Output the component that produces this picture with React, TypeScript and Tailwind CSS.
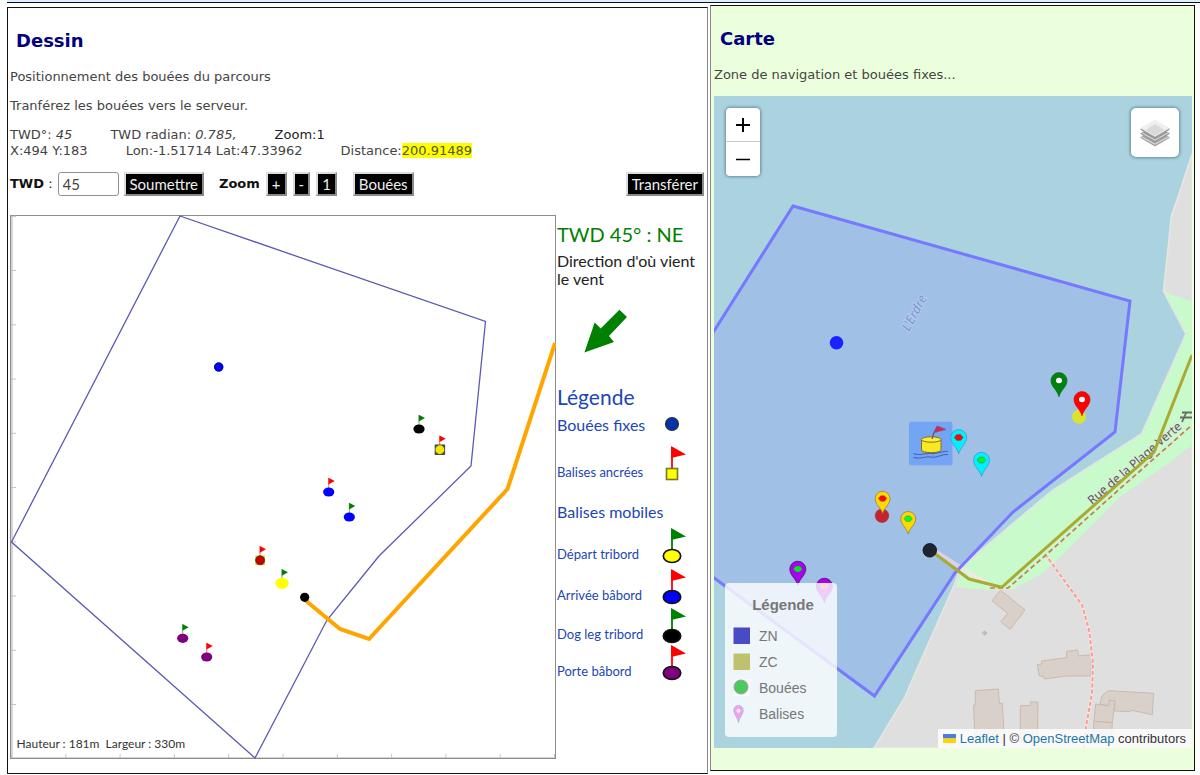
import React from "react";

const RED = "#ff0000";
const GREEN = "#008000";

type BuoyProps = { x: number; y: number; fill: string; flag: string; rx?: number; ry?: number };

function Flag({ x, y, color }: { x: number; y: number; color: string }) {
  return (
    <g transform={`translate(${x} ${y})`}>
      <path d="M0 -4V-14" stroke={color} strokeWidth="0.6" />
      <path d="M-0.2 -14.3L6 -11L-0.2 -7.6Z" fill={color} />
    </g>
  );
}

function Buoy({ x, y, fill, flag, rx = 5.6, ry = 4.6 }: BuoyProps) {
  return (
    <g>
      <Flag x={x} y={y} color={flag} />
      <ellipse cx={x} cy={y} rx={rx} ry={ry} fill={fill} />
    </g>
  );
}

function CourseDrawing() {
  const ticks = [0, 1, 2, 3, 4, 5, 6, 7, 8, 9, 10];
  return (
    <svg viewBox="10 215 546 544" className="block min-w-0 flex-1" role="img" aria-label="Parcours">
      <rect x="10.5" y="215.5" width="545" height="543" fill="#fff" stroke="#8c8c8c" />
      <path d="M12 216V758" stroke="#d6d6d6" strokeWidth="2" />
      <path d="M11 757.5H555" stroke="#d6d6d6" />
      {ticks.map((t) => (
        <g key={t} stroke="#c4c4c4">
          {t < 10 && <path d={`M11 ${216.3 + t * 54.25}h5`} />}
          <path d={`M${11.5 + t * 54.3} 754v4`} />
        </g>
      ))}
      <path
        d="M180 216L485.5 321.5L471 466L379 556L327 620L255 758L11.5 542Z"
        fill="none"
        stroke="#5a5ab4"
        strokeWidth="1.3"
      />
      <path d="M305 600L340 629L369 639L507.5 489L555 343" fill="none" stroke="#ffa500" strokeWidth="4" />
      <circle cx="218.7" cy="367" r="4.6" fill="#0000ff" />
      <circle cx="218.7" cy="367" r="4.2" fill="none" stroke="#00007a" strokeWidth="0.8" />
      <Buoy x={419} y={429} fill="#000" flag={GREEN} />
      <Flag x={439.7} y={449.7} color={RED} />
      <rect x="435.2" y="445" width="9.4" height="9.4" fill="#44442e" stroke="#444" />
      <circle cx="439.9" cy="449.7" r="4.4" fill="#f0e800" />
      <Buoy x={328.7} y={492} fill="#0000ff" flag={RED} />
      <Buoy x={349.3} y={517} fill="#0000ff" flag={GREEN} />
      <Flag x={260} y={560.3} color={RED} />
      <rect x="255.4" y="555.6" width="9.4" height="9.4" fill="#d8c800" />
      <circle cx="260.1" cy="560.3" r="4.5" fill="#c40000" stroke="#5c2000" strokeWidth="0.7" />
      <Buoy x={282} y={583.3} fill="#ffff00" flag={GREEN} rx={6.7} ry={5.6} />
      <circle cx="304.7" cy="597.3" r="4.6" fill="#000" />
      <Buoy x={182.7} y={638.3} fill="#800080" flag={GREEN} />
      <Buoy x={206.7} y={657} fill="#800080" flag={RED} />
      <text x="16.5" y="748" className="whitespace-pre fill-[#333] text-[12px]">
        {"Hauteur : 181m  Largeur : 330m"}
      </text>
    </svg>
  );
}

function LegendIcon({ shape, fill, flag }: { shape: string; fill: string; flag?: string }) {
  return (
    <svg viewBox="-16 -18 32 32" className="h-8 w-8 shrink-0 overflow-visible" aria-hidden="true">
      {flag && (
        <g>
          <path d="M0 0V-27" stroke={flag} strokeWidth="1.8" />
          <path d="M-0.9 -28L14 -19.5L-0.9 -16Z" fill={flag} />
        </g>
      )}
      {shape === "circle" && <circle cx="0" cy="-3" r="6.5" fill={fill} stroke="#333" strokeWidth="1.2" />}
      {shape === "square" && <rect x="-5.5" y="-5.5" width="11" height="11" fill={fill} stroke="#77772a" strokeWidth="1.6" />}
      {shape === "ellipse" && <ellipse cx="0" cy="0" rx="8.7" ry="6.5" fill={fill} stroke="#111" strokeWidth="1.7" />}
    </svg>
  );
}

function WindLegend() {
  return (
    <aside className="flex w-[149px] shrink-0 flex-col pl-px text-[#1c46b4]">
      <p className="mt-[5px] text-[20px] leading-7 text-[#008000]">TWD 45° : NE</p>
      <p className="mt-1 text-[16px] leading-[18px] text-[#222]">
        Direction d'où vient
        <br />
        le vent
      </p>
      <svg viewBox="584 309 44 44" className="ml-[27px] mt-[21px] h-11 w-11" aria-hidden="true">
        <path d="M584.4 352.6L594.7 322.4L600.7 328.4L619.4 309.7L627 317L609 336L614 342Z" fill="#008000" />
      </svg>
      <h2 className="mt-8 text-[21px] leading-6">Légende</h2>
      <ul className="flex flex-col text-[13px]">
        <li className="flex h-8 items-center justify-between pr-[17px] text-[16px]">Bouées fixes<LegendIcon shape="circle" fill="#0033a8" /></li>
        <li className="mt-[15px] flex h-8 items-center justify-between pr-[17px]">Balises ancrées<LegendIcon shape="square" fill="#ffff00" flag={RED} /></li>
        <li className="mt-2 flex h-8 items-center text-[16px]">Balises mobiles</li>
        <li className="mt-[10px] flex h-8 items-center justify-between pr-[17px]">Départ tribord<LegendIcon shape="ellipse" fill="#ffff00" flag={GREEN} /></li>
        <li className="mt-[9px] flex h-8 items-center justify-between pr-[17px]">Arrivée bâbord<LegendIcon shape="ellipse" fill="#0000ff" flag={RED} /></li>
        <li className="mt-[7px] flex h-8 items-center justify-between pr-[17px]">Dog leg tribord<LegendIcon shape="ellipse" fill="#000" flag={GREEN} /></li>
        <li className="mt-[5px] flex h-8 items-center justify-between pr-[17px]">Porte bâbord<LegendIcon shape="ellipse" fill="#800080" flag={RED} /></li>
      </ul>
    </aside>
  );
}

function BlackButton({ children }: { children: React.ReactNode }) {
  return (
    <button
      type="button"
      className="h-6 border-2 border-b-[#8a8a8a] border-l-[#dcdcdc] border-r-[#8a8a8a] border-t-[#dcdcdc] bg-black px-1 font-['Lato','Noto_Sans',sans-serif] text-[15px] leading-5 text-[#eee]"
    >
      {children}
    </button>
  );
}

type PinProps = { x: number; y: number; fill: string; edge: string; dot: string; s?: number };

function Pin({ x, y, fill, edge, dot, s = 1 }: PinProps) {
  return (
    <g transform={`translate(${x} ${y}) scale(${s})`}>
      <path
        d="M0 0C-1.6 -6.5 -8 -10 -8 -16.2A8 7.9 0 0 1 8 -16.2C8 -10 1.6 -6.5 0 0Z"
        fill={fill}
        stroke={edge}
        strokeWidth="0.7"
      />
      {dot === "#fff" ? (
        <ellipse cx="0" cy="-16.2" rx="3" ry="2.8" fill="#fff" />
      ) : (
        <path d="M-4.5 -16.3L-2 -19.3H2L4.5 -16.3L2 -13.3H-2Z" fill={dot} stroke="#555" strokeWidth="0.4" />
      )}
    </g>
  );
}

function MapDrawing() {
  return (
    <svg
      viewBox="714 96 478 652"
      preserveAspectRatio="xMidYMid slice"
      className="absolute inset-0 h-full w-full"
      role="img"
      aria-label="Carte de l'Erdre"
    >
      <rect x="600" y="0" width="800" height="900" fill="#aad3df" />
      <path
        d="M1192 154L1177 200L1171.5 215L1163.5 291L1186 334L1156.5 400L1141.7 434L1053 490L960 568L955 583L913 678L905 697L874 748H1192Z"
        fill="#dfdfdf"
        stroke="#e6e6e2"
        strokeWidth="1.5"
      />
      <path
        d="M1163.5 291L1192 302V445L1173 460L1120 497L1057 560L1040 575L1013 589L988 590L956 587L962 568L1053 490L1141.7 434L1186 334Z"
        fill="#c8facc"
      />
      <path d="M1163.5 291L1186 334L1141.7 434L1053 490L960 568" fill="none" stroke="#e2e6e2" strokeWidth="1.5" />
      <g transform="translate(930 540) scale(0.3333)" fill="#d9d0c9" stroke="#c8bab0" strokeWidth="3">
        <path d="M212 151L285 210L241 268L212 245L233 220L186 182Z" />
        <path d="M322 374L335 372V363L410 353V334L443 330L446 348L485 344L483 408H410L343 417L340 409L328 408Z" />
        <path d="M136 452L205 447L208 490H217L222 580V607H135L131 495H136Z" />
        <path d="M271 497H300L302 485L324 487L322 607H271Z" />
        <path d="M535 452L671 460L667 524L605 511L600 515L553 513L555 482L538 481L536 498L510 492L516 468Z" />
        <path d="M497 492L536 498L538 481L555 483L547 548L492 544Z" />
        <path d="M492 544L547 548L543 607H487Z" />
        <path d="M164 272L171 279L164 286L157 279Z" fill="#c8bab0" />
      </g>
      <path d="M1045 554L1082 605L1089 630L1093 663L1092 693L1086 727L1084 748" fill="none" stroke="#f0e6e4" strokeWidth="3" />
      <path d="M1045 554L1082 605L1089 630L1093 663L1092 693L1086 727L1084 748" fill="none" stroke="#fa9a90" strokeWidth="1.8" strokeDasharray="4 2.2" />
      <path d="M990 588H1008L1047 554L1123 486L1192 425" fill="none" stroke="#e0ecd2" strokeWidth="2.6" />
      <path d="M990 588H1008L1047 554L1123 486L1192 425" fill="none" stroke="#ac8a4c" strokeWidth="1.7" strokeDasharray="5 3" />
      <path d="M932 549L963 569L990 585" fill="none" stroke="#efe9e4" strokeWidth="4" />
      <path d="M1182 412.5H1197M1180 417.5H1199M1186.5 412L1182 422M1192.5 412L1197 422" fill="none" stroke="#6b6b66" strokeWidth="1.8" />
      <path
        d="M793 206L1130 301L1115 432L1012.5 512.5L955 573L874.5 696L607.5 499.5Z"
        fill="#7777ff"
        fillOpacity="0.2"
        stroke="#7777ff"
        strokeWidth="3"
      />
      <text
        transform="translate(909 332) rotate(-62)"
        className="fill-[#7c96cf] stroke-[#b4cbef] font-['Noto_Sans',sans-serif] text-[13px] italic [paint-order:stroke] [stroke-width:2px]"
      >
        L'Erdre
      </text>
      <text
        transform="translate(1092 505) rotate(-40.6)"
        className="fill-[#555] stroke-[#dcf0dc] font-['Noto_Sans',sans-serif] text-[12px] [paint-order:stroke] [stroke-width:2px]"
      >
        Rue de la Plage Verte
      </text>
      <path d="M1192 355L1154 452L1001.7 587.3L969 579L932 551.5" fill="none" stroke="#aaaa33" strokeWidth="3" />
      <circle cx="836.5" cy="342.7" r="6.8" fill="#1c22ff" />
      <circle cx="1079" cy="416.7" r="7" fill="#dce32e" />
      <circle cx="882" cy="515.7" r="6.8" fill="#c4252d" stroke="#a8283c" strokeWidth="0.6" />
      <circle cx="929.8" cy="550.3" r="6.8" fill="#1e2530" stroke="#080c14" strokeWidth="0.8" />
      <g>
        <rect x="909" y="421.7" width="43.5" height="43.5" rx="2.5" fill="#74a4f4" />
        <path d="M921.5 439.5V450C921.5 453.5 941 453.5 941 450V439.5" fill="#f8ea20" stroke="#8a6d1c" />
        <ellipse cx="931.2" cy="439.5" rx="9.8" ry="2.7" fill="#fbee3c" stroke="#8a6d1c" />
        <path d="M932 439C933 434 935 430 937.5 426" fill="none" stroke="#6e4a50" strokeWidth="1.2" />
        <path d="M937.5 426L946 429.5L934.5 432.5Z" fill="#e0244c" stroke="#7a5080" strokeWidth="0.6" />
        <path
          d="M913.5 453.5C920 456.5 925 452.5 931 453.5S941 451 948 451.2M913.5 457.2C920 460 925 455.6 931 457S941 454 948 454.6"
          fill="none"
          stroke="#4664b8"
          strokeWidth="1.1"
        />
      </g>
      <Pin x={1059} y={396.7} fill="#048010" edge="#04700c" dot="#fff" />
      <Pin x={1082} y={415.7} fill="#ff0000" edge="#e80010" dot="#fff" />
      <Pin x={958.7} y={453.7} fill="#00f0ff" edge="#3f8cc8" dot="#f80808" />
      <Pin x={981.5} y={476.4} fill="#00f0ff" edge="#3f8cc8" dot="#08f030" />
      <Pin x={882.6} y={513.7} fill="#ffd800" edge="#7c7440" dot="#f80808" s={0.93} />
      <Pin x={908.2} y={533.9} fill="#ffd800" edge="#7c7440" dot="#00ff30" s={0.93} />
      <Pin x={797.8} y={585.3} fill="#a800f0" edge="#36104c" dot="#08e030" />
      <Pin x={824.4} y={602.3} fill="#a800f0" edge="#36104c" dot="#f06020" />
    </svg>
  );
}

function MapLegend() {
  return (
    <div className="absolute bottom-[11px] left-[11px] h-[154px] w-[112px] rounded-[4px] bg-white/80 px-2 pt-3 text-[14px] text-[#777]">
      <h2 className="pl-1 text-center text-[15px] font-bold leading-5">Légende</h2>
      <ul className="mt-2 flex flex-col">
        <li className="flex h-[26px] items-center gap-2">
          <svg viewBox="0 0 18 18" className="h-[18px] w-[18px]" aria-hidden="true"><rect x="0.5" y="0.5" width="16.5" height="16.5" fill="#484bc4" /></svg>
          ZN
        </li>
        <li className="flex h-[26px] items-center gap-2">
          <svg viewBox="0 0 18 18" className="h-[18px] w-[18px]" aria-hidden="true"><rect x="0.5" y="0.5" width="16.5" height="16.5" fill="#bfc16e" /></svg>
          ZC
        </li>
        <li className="flex h-[26px] items-center gap-2">
          <svg viewBox="0 0 18 18" className="h-[18px] w-[18px]" aria-hidden="true">
            <rect x="1" y="0" width="16" height="17" fill="#f8fafc" />
            <circle cx="8" cy="8" r="7" fill="#48ce58" stroke="#a898a8" />
          </svg>
          Bouées
        </li>
        <li className="flex h-[26px] items-center gap-2">
          <svg viewBox="0 0 18 18" className="h-[18px] w-[18px]" aria-hidden="true">
            <path d="M5.5 17.5C5 12.5 0.8 9.5 0.8 5.5A4.7 5 0 0 1 10.2 5.5C10.2 9.5 6 12.5 5.5 17.5Z" fill="#fa9cf0" stroke="#a8bce4" />
            <circle cx="5.5" cy="5.8" r="2" fill="#eef4fa" />
          </svg>
          Balises
        </li>
      </ul>
    </div>
  );
}

function LeafletMap() {
  return (
    <div className="relative h-[652px] overflow-hidden font-['Liberation_Sans',Arial,sans-serif]">
      <MapDrawing />
      <div className="absolute left-3 top-3 flex w-[34px] flex-col rounded-[4px] bg-white shadow-[0_0_3px_1px_rgba(60,90,110,0.6)]">
        <button type="button" aria-label="Zoom avant" className="flex h-[34px] items-center justify-center border-b border-[#ccc]">
          <svg viewBox="0 0 14 14" className="h-3.5 w-3.5" aria-hidden="true"><path d="M0 7H14M7 0V14" stroke="#000" strokeWidth="2" /></svg>
        </button>
        <button type="button" aria-label="Zoom arrière" className="flex h-[34px] items-center justify-center">
          <svg viewBox="0 0 14 14" className="h-3.5 w-3.5" aria-hidden="true"><path d="M0 7.5H14" stroke="#000" strokeWidth="1.5" /></svg>
        </button>
      </div>
      <button
        type="button"
        aria-label="Couches"
        className="absolute right-[13px] top-3 flex h-[49px] w-[48px] items-center justify-center rounded-[5px] bg-white shadow-[0_0_3px_1px_rgba(60,90,110,0.6)]"
      >
        <svg viewBox="0 0 30 28" className="h-7 w-[30px]" aria-hidden="true">
          <path d="M0.5 18L15 9L29.5 18V19L15 27.5L0.5 19Z" fill="#a4a4a4" />
          <path d="M0.5 17.2L15 25.2L29.5 17.2" fill="none" stroke="#e4e4e4" strokeWidth="1" />
          <path d="M0.5 14L15 6L29.5 14V15L15 23.8L0.5 15Z" fill="#9a9a9a" />
          <path d="M0.5 13L15 21.2L29.5 13" fill="none" stroke="#e4e4e4" strokeWidth="1" />
          <path d="M0.5 9.5L15 2L29.5 9.5V10.8L15 19.6L0.5 10.8Z" fill="#9a9a9a" />
          <path d="M15 0.5L29.5 9.3L15 17.8L0.5 9.3Z" fill="#efefef" />
          <path d="M15 5L24.5 11L15 16.8L5.5 11Z" fill="#dadada" />
        </svg>
      </button>
      <MapLegend />
      <div className="absolute bottom-0 right-0 flex h-[19px] items-center gap-1 bg-white/80 pl-[5px] pr-1.5 text-[13px] text-[#333]">
        <svg viewBox="0 0 13 9" className="h-[9px] w-[13px]" aria-hidden="true">
          <path d="M0 0H13V4.5H0Z" fill="#4c7be1" />
          <path d="M0 4.5H13V9H0Z" fill="#ffd500" />
        </svg>
        <span>
          <a href="https://leafletjs.com" className="text-[#1f76a8]">Leaflet</a> | ©{" "}
          <a href="https://www.openstreetmap.org/copyright" className="text-[#1f76a8]">OpenStreetMap</a> contributors
        </span>
      </div>
    </div>
  );
}

export default function App() {
  return (
    <div className="min-h-screen bg-white font-['DejaVu_Sans',Verdana,sans-serif] text-[13px] leading-4 text-[#444]">
      <div className="ml-[7px] h-[3px] border-b border-[#111] bg-[#dceeff]" />
      <main className="grid grid-cols-[minmax(0,701fr)_minmax(0,485fr)] items-start gap-x-[2px] pl-[7px] pr-[5px]">
        <section className="mt-1 border border-[#111] border-r-[#888] px-[2px] pb-[14px] pt-[21px]">
          <h1 className="pl-[6px] text-[18px] font-bold leading-6 text-[#000080]">Dessin</h1>
          <p className="mt-4">Positionnement des bouées du parcours</p>
          <p className="mt-[13px]">Tranférez les bouées vers le serveur.</p>
          <div className="mt-[13px] flex">
            <span>TWD°: <em>45</em></span>
            <span className="ml-[38px]">TWD radian: <em>0.785,</em></span>
            <span className="ml-[38px] text-[#222]">Zoom:1</span>
          </div>
          <div className="flex">
            <span>X:494 Y:183</span>
            <span className="ml-[38px]">Lon:-1.51714 Lat:47.33962</span>
            <span className="ml-[38px]">Distance:<mark className="bg-[#ffff00] text-[#553]">200.91489</mark></span>
          </div>
          <form className="mt-[13px] flex items-center text-[#111]" onSubmit={(e) => e.preventDefault()}>
            <label htmlFor="twd"><b>TWD</b> :</label>
            <input
              id="twd"
              type="text"
              defaultValue="45"
              className="ml-[5px] mr-[5px] h-6 w-[61px] rounded-[3px] border border-[#8f8f9d] px-1 font-['Lato','Noto_Sans',sans-serif] text-[15px] text-[#444]"
            />
            <BlackButton>Soumettre</BlackButton>
            <b className="ml-[15px] mr-1.5">Zoom</b>
            <div className="flex gap-[6px]">
              <BlackButton>+</BlackButton>
              <BlackButton>-</BlackButton>
              <BlackButton>1</BlackButton>
            </div>
            <div className="ml-4 flex flex-1 justify-between pr-[1px]">
              <BlackButton>Bouées</BlackButton>
              <BlackButton>Transférer</BlackButton>
            </div>
          </form>
          <div className="mt-[19px] flex items-start font-['Lato','Noto_Sans',sans-serif]">
            <CourseDrawing />
            <WindLegend />
          </div>
        </section>
        <section className="mt-[2px] border border-[#111] border-l-[#888] bg-[#ecffdc] pb-[22px] pl-[3px] pr-[2px] pt-[21px]">
          <h1 className="pl-[6px] text-[18px] font-bold leading-6 text-[#000080]">Carte</h1>
          <p className="mb-[13px] mt-4">Zone de navigation et bouées fixes...</p>
          <LeafletMap />
        </section>
      </main>
    </div>
  );
}
